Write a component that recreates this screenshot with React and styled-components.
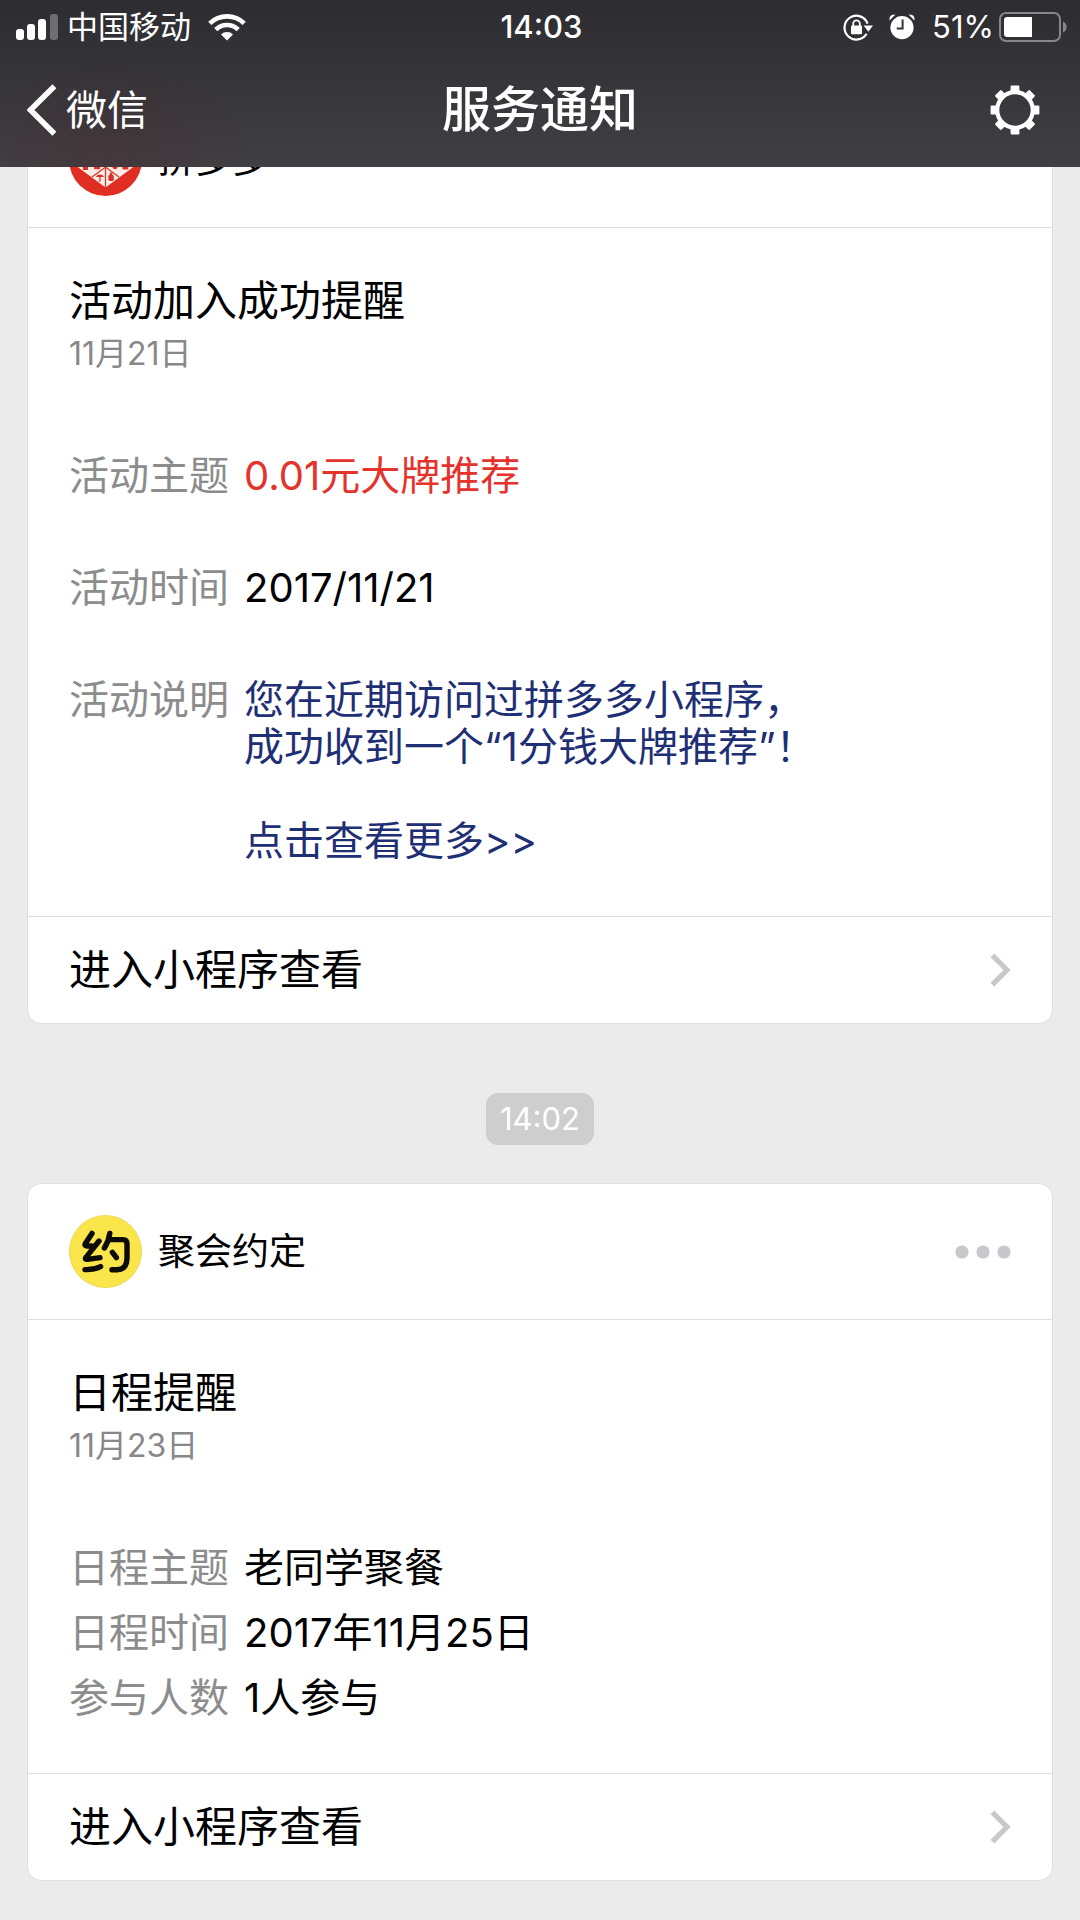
import React from 'react';
import styled, { createGlobalStyle } from 'styled-components';

const GlobalStyle = createGlobalStyle`
  body {
    margin: 0;
    background-color: #ebebeb;
    color: #000;
    font-family: Inter, 'Noto Sans CJK SC', sans-serif;
  }

  button {
    padding: 0;
    border: 0;
    background: none;
    color: inherit;
    font: inherit;
    cursor: pointer;
  }
`;

const CARDS = [
  {
    name: '拼多多',
    logo: 'pinduoduo',
    title: '活动加入成功提醒',
    date: '11月21日',
    gap: 65,
    fields: [
      { label: '活动主题', value: '0.01元大牌推荐', color: '#e5322b' },
      { label: '活动时间', value: '2017/11/21' },
      {
        label: '活动说明',
        value:
          '您在近期访问过拼多多小程序，\n成功收到一个“1分钱大牌推荐”！\n\n点击查看更多>>',
        color: '#1f2f75',
      },
    ],
  },
  {
    time: '14:02',
    name: '聚会约定',
    logo: 'yue',
    title: '日程提醒',
    date: '11月23日',
    gap: 18,
    fields: [
      { label: '日程主题', value: '老同学聚餐' },
      { label: '日程时间', value: '2017年11月25日' },
      { label: '参与人数', value: '1人参与' },
    ],
  },
];

const SignalIcon = () => (
  <svg width="42" height="27" viewBox="0 0 42 27" fill="#fff">
    <rect x="0" y="15" width="8" height="11" rx="3" />
    <rect x="11" y="10" width="8" height="16" rx="3" />
    <rect x="22" y="5" width="8" height="21" rx="3" />
    <rect x="34" y="0" width="8" height="26" rx="3" opacity="0.3" />
  </svg>
);

const WifiIcon = () => (
  <svg width="38" height="27" viewBox="0 0 38 27">
    <g fill="none" stroke="#fff" strokeWidth="4.6">
      <path d="M1.8 9.4A24.5 24.5 0 0 1 36.2 9.4" />
      <path d="M7.8 15.6A16 16 0 0 1 30.2 15.6" />
    </g>
    <path d="M13 20.4A8.6 8.6 0 0 1 25 20.4L19 26.6Z" fill="#fff" />
  </svg>
);

const RotationLockIcon = () => (
  <svg width="31" height="27" viewBox="0 0 31 27">
    <path
      d="M24.6 9.6A11.9 11.9 0 1 0 23.6 19.8"
      fill="none"
      stroke="#fff"
      strokeWidth="2.2"
    />
    <path d="M20.6 11.4H30L25.3 17.8Z" fill="#fff" />
    <rect x="8" y="11.6" width="11" height="8.6" rx="1" fill="#fff" />
    <path
      d="M10.2 12V9.6a3.3 3.3 0 0 1 6.6 0V12"
      fill="none"
      stroke="#fff"
      strokeWidth="1.8"
    />
  </svg>
);

const AlarmIcon = () => (
  <svg width="26" height="26" viewBox="0 0 26 26">
    <circle cx="13" cy="13.6" r="11.6" fill="#fff" />
    <path d="M0.6 6.4Q-0.4 0.6 6.4 0.6Z" fill="#fff" />
    <path d="M25.4 6.4Q26.4 0.6 19.6 0.6Z" fill="#fff" />
    <path d="M13.6 5.6V14.4H7.8" fill="none" stroke="#333237" strokeWidth="2" />
  </svg>
);

const BatteryIcon = () => (
  <svg width="68" height="30" viewBox="0 0 68 30">
    <rect
      x="1"
      y="1"
      width="60"
      height="28"
      rx="6"
      fill="none"
      stroke="#87868a"
      strokeWidth="2"
    />
    <path d="M64 9.5A6 6 0 0 1 64 20.5Z" fill="#87868a" />
    <path d="M8 5H33V25H8A3 3 0 0 1 5 22V8A3 3 0 0 1 8 5Z" fill="#fff" />
  </svg>
);

const BackIcon = () => (
  <svg width="30" height="52" viewBox="0 0 30 52">
    <path d="M27.4 2.2L3.4 26L27.4 49.8" fill="none" stroke="#fff" strokeWidth="5.6" />
  </svg>
);

const TEETH = [0, 45, 90, 135, 180, 225, 270, 315];

const GearIcon = () => (
  <svg width="50" height="50" viewBox="0 0 50 50">
    <circle cx="25" cy="25" r="17.8" fill="none" stroke="#fff" strokeWidth="4.2" />
    {TEETH.map((angle) => (
      <rect
        key={angle}
        x="20.6"
        y="0.6"
        width="8.8"
        height="7"
        rx="1.2"
        fill="#fff"
        transform={`rotate(${angle} 25 25)`}
      />
    ))}
  </svg>
);

const ChevronIcon = () => (
  <svg width="21" height="34" viewBox="0 0 21 34">
    <path d="M2.4 2.4L17 17L2.4 31.6" fill="none" stroke="#c7c7cc" strokeWidth="5.2" />
  </svg>
);

const MoreIcon = () => (
  <svg width="56" height="14" viewBox="0 0 56 14" fill="#c7c7cc">
    <circle cx="7" cy="7" r="6.6" />
    <circle cx="28" cy="7" r="6.6" />
    <circle cx="49" cy="7" r="6.6" />
  </svg>
);

const PinduoduoLogo = () => (
  <svg width="73" height="73" viewBox="0 0 73 73">
    <circle cx="36.5" cy="36.5" r="36.5" fill="#e02e24" />
    <path d="M36.5 64.5L8 43.5V24L22 13L36.5 24L51 13L65 24V43.5Z" fill="#fbeee6" />
    <g stroke="#e02e24" strokeWidth="1.2" fill="none">
      <path d="M36.5 24V64.5M23 13V44M50 13V44" />
      <path d="M9 24L50 54M64 24L23 54M36.5 24L9.5 44M36.5 24L63.5 44" />
    </g>
    <g fill="#e02e24">
      <path d="M26.8 54a4.6 4.4 0 0 1 8.2 0h-3.4v4.4h-1.8v-1h.6V54z" />
      <rect x="39.4" y="52" width="5.4" height="6" rx="1.4" />
      <rect x="40.8" y="49.6" width="2.6" height="3" rx="1" />
      <rect x="14" y="42.6" width="5" height="4.4" />
      <rect x="25" y="41.6" width="6" height="4.6" />
      <circle cx="46" cy="43.6" r="2.6" />
      <rect x="53.4" y="42.4" width="6" height="4" rx="1" />
    </g>
  </svg>
);

const YueLogo = () => (
  <svg width="73" height="73" viewBox="0 0 73 73">
    <circle cx="36.5" cy="36.5" r="36" fill="#fae54b" stroke="#ecd94f" />
    <g
      fill="none"
      stroke="#0d0b05"
      strokeWidth="5.4"
      strokeLinecap="round"
      strokeLinejoin="round"
    >
      <path d="M23 18.4L16.4 28.4Q15 31 18.4 31H22.6M30 26L17 42.4Q15.4 44.6 18.6 44.4L31 42.6" />
      <path d="M16 54.6Q25 55 31.6 51.6" />
      <path d="M40.8 18.4Q39.4 27 35.4 33" />
      <path d="M40 24.6H54Q58 24.6 58 29V43Q58 54.6 48 54.8H43" />
      <path d="M43.4 37.4L47.4 42.6" />
    </g>
  </svg>
);

const LOGOS = { pinduoduo: PinduoduoLogo, yue: YueLogo };

const Header = styled.header`
  position: sticky;
  top: 0;
  z-index: 1;
  height: 167px;
  color: #fff;
  background:
    radial-gradient(ellipse 150px 90px at 106px 150px, rgba(90, 20, 20, 0.16), transparent),
    linear-gradient(#2d2c31, #403f43);
`;

const StatusBar = styled.div`
  display: grid;
  grid-template-columns: 1fr auto 1fr;
  align-items: center;
  height: 54px;
  padding: 0 13px 0 16px;
  font-size: 31px;
  line-height: 54px;
`;

const StatusGroup = styled.div`
  display: flex;
  align-items: center;
  justify-content: ${(props) => (props.$end ? 'flex-end' : 'flex-start')};
  gap: ${(props) => props.$gap}px;
`;

const Carrier = styled.span`
  margin-right: 8px;
`;

const Clock = styled.span`
  font-weight: 500;
`;

const Percent = styled.span`
  margin-left: 12px;
`;

const NavBar = styled.nav`
  display: grid;
  grid-template-columns: 1fr auto 1fr;
  align-items: center;
  height: 112px;
  padding: 0 27px;
  line-height: 60px;
`;

const BackButton = styled.button`
  display: flex;
  align-items: center;
  justify-self: start;
  gap: 9px;
  font-size: 41px;
`;

const PageTitle = styled.h1`
  margin: 0;
  font-size: 49px;
  font-weight: 500;
`;

const SettingsButton = styled.button`
  display: flex;
  justify-self: end;
  margin-right: 13px;
`;

const Feed = styled.main`
  display: flex;
  flex-direction: column;
  margin-top: -76px;
  padding: 0 27px 38px;
`;

const TimeStamp = styled.time`
  align-self: center;
  margin: 69px 0 38px;
  padding: 0 14px;
  border-radius: 12px;
  background-color: #cecece;
  color: #fff;
  font-size: 31px;
  line-height: 52px;
`;

const CardBox = styled.article`
  border: 1px solid #dfdfdf;
  border-radius: 14px;
  background-color: #fff;
`;

const CardHeader = styled.header`
  display: flex;
  align-items: center;
  gap: 16px;
  height: 135px;
  padding: 0 41px;
  border-bottom: 1px solid #dfdfdf;
`;

const SourceName = styled.span`
  flex: 1;
  font-size: 37px;
  line-height: 48px;
`;

const MoreButton = styled.button`
  display: flex;
`;

const CardBody = styled.div`
  padding: 43px 41px 52px;
`;

const CardTitle = styled.h2`
  margin: 0;
  font-size: 42px;
  font-weight: 400;
  line-height: 60px;
`;

const CardDate = styled.p`
  margin: 0 0 75px;
  color: #888;
  font-size: 32px;
  line-height: 46px;
`;

const Fields = styled.dl`
  display: grid;
  grid-template-columns: max-content 1fr;
  gap: ${(props) => props.$gap}px 15px;
  margin: 0;
  font-size: 40px;
  line-height: 47px;
`;

const FieldLabel = styled.dt`
  color: #8c8c8c;
`;

const FieldValue = styled.dd`
  margin: 0;
  color: ${(props) => props.$color || '#000'};
  white-space: pre-line;
`;

const CardLink = styled.a`
  display: flex;
  align-items: center;
  justify-content: space-between;
  height: 106px;
  padding: 0 41px;
  border-top: 1px solid #dfdfdf;
  color: inherit;
  font-size: 42px;
  line-height: 60px;
  text-decoration: none;
`;

const Card = ({ card }) => {
  const Logo = LOGOS[card.logo];

  return (
    <CardBox>
      <CardHeader>
        <Logo />
        <SourceName>{card.name}</SourceName>
        <MoreButton aria-label="更多">
          <MoreIcon />
        </MoreButton>
      </CardHeader>
      <CardBody>
        <CardTitle>{card.title}</CardTitle>
        <CardDate>{card.date}</CardDate>
        <Fields $gap={card.gap}>
          {card.fields.map((field) => (
            <React.Fragment key={field.label}>
              <FieldLabel>{field.label}</FieldLabel>
              <FieldValue $color={field.color}>{field.value}</FieldValue>
            </React.Fragment>
          ))}
        </Fields>
      </CardBody>
      <CardLink href="#">
        进入小程序查看
        <ChevronIcon />
      </CardLink>
    </CardBox>
  );
};

const App = () => {
  return (
    <>
      <GlobalStyle />
      <Header>
        <StatusBar>
          <StatusGroup $gap={9}>
            <SignalIcon />
            <Carrier>中国移动</Carrier>
            <WifiIcon />
          </StatusGroup>
          <Clock>14:03</Clock>
          <StatusGroup $end $gap={5}>
            <StatusGroup $gap={15}>
              <RotationLockIcon />
              <AlarmIcon />
            </StatusGroup>
            <Percent>51%</Percent>
            <BatteryIcon />
          </StatusGroup>
        </StatusBar>
        <NavBar>
          <BackButton>
            <BackIcon />
            微信
          </BackButton>
          <PageTitle>服务通知</PageTitle>
          <SettingsButton aria-label="设置">
            <GearIcon />
          </SettingsButton>
        </NavBar>
      </Header>
      <Feed>
        {CARDS.map((card) => (
          <React.Fragment key={card.name}>
            {card.time && <TimeStamp>{card.time}</TimeStamp>}
            <Card card={card} />
          </React.Fragment>
        ))}
      </Feed>
    </>
  );
};

export default App;
